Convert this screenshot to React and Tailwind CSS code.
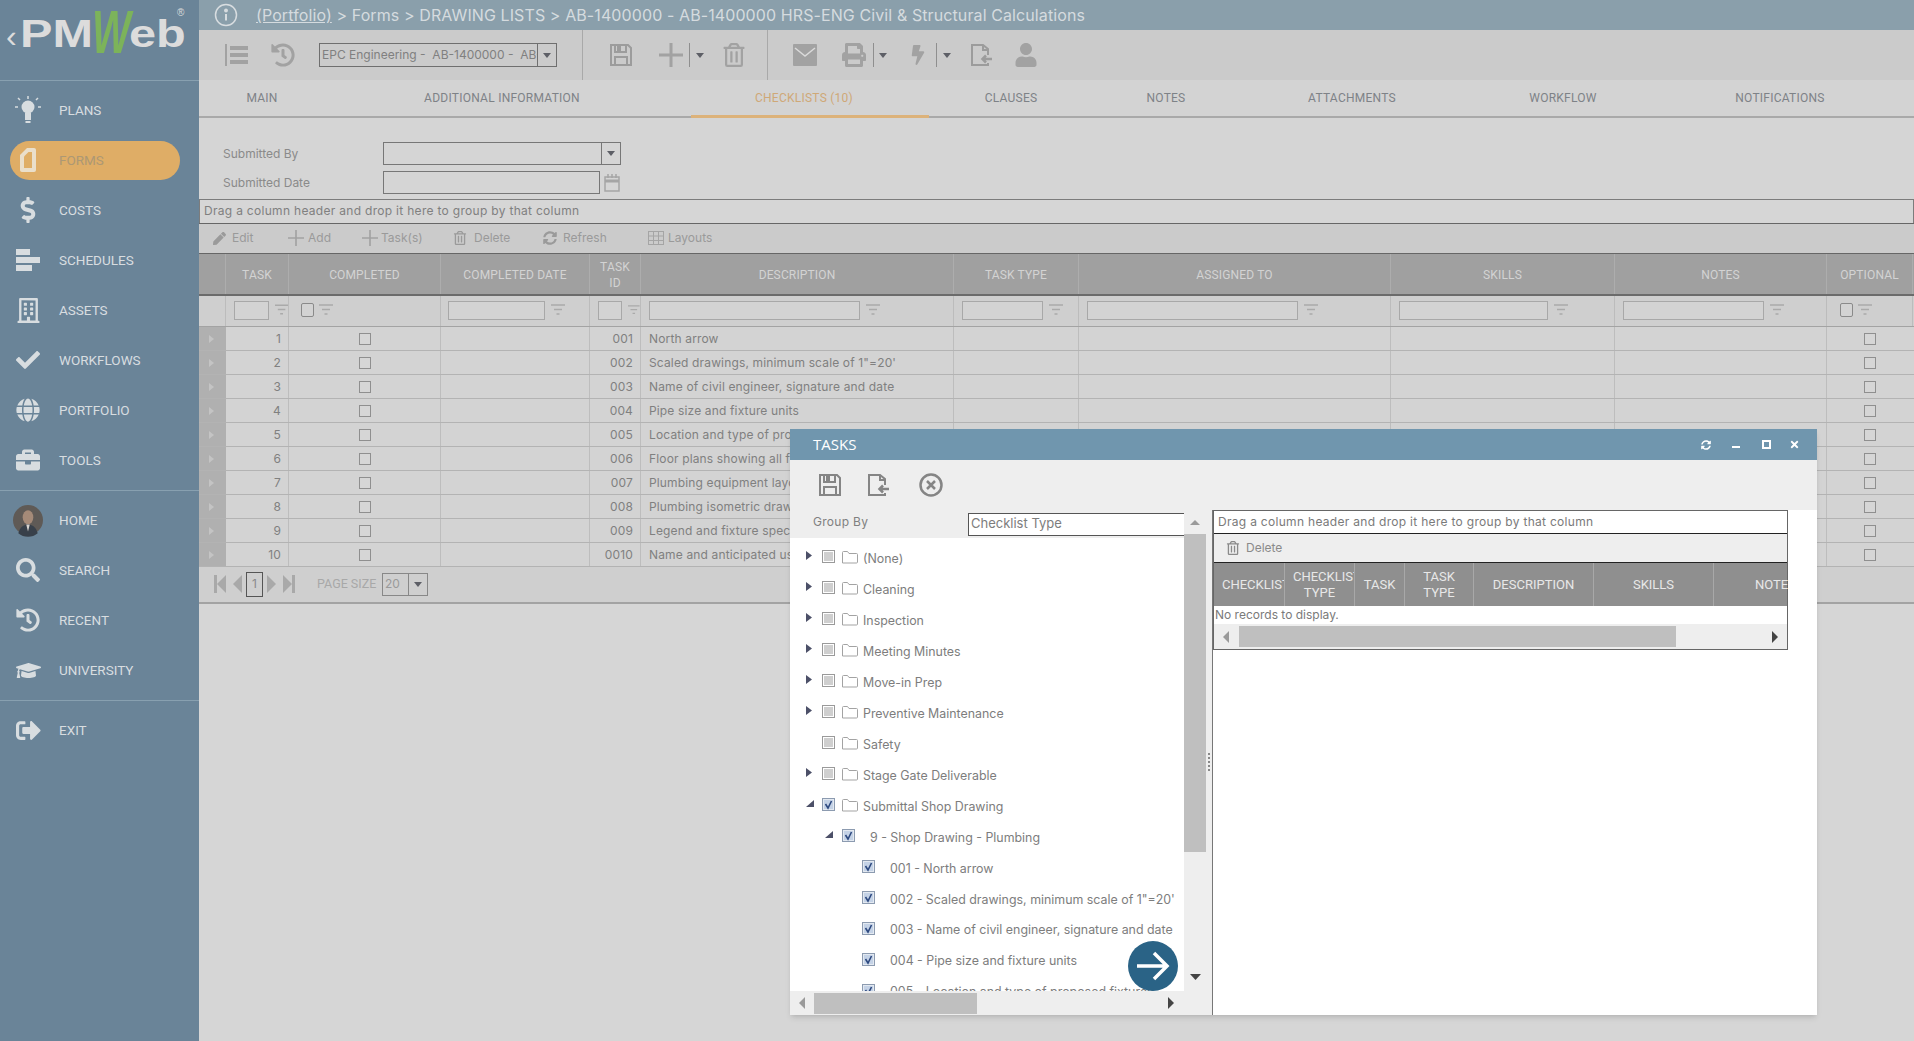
import React from 'react';
import { FaHistory, FaRegTrashAlt, FaPrint, FaBolt, FaUser, FaDollarSign, FaCheck, FaGlobe, FaBriefcase, FaSearch, FaGraduationCap, FaSignOutAlt, FaRegBuilding, FaPen, FaSyncAlt, FaTimes } from 'react-icons/fa';

const GRID = 'grid grid-cols-[27px_63px_152px_149px_51px_313px_125px_312px_224px_212px_86px]';

function Bulb() {
  return (
    <svg width="26" height="28" viewBox="0 0 26 28" fill="#d8dde0">
      <circle cx="13" cy="11" r="6.5" />
      <rect x="10" y="17" width="6" height="7" />
      <rect x="10.5" y="25" width="5" height="2" />
      <path d="M13 0v3M3 11H0M26 11h-3M5 4 3 2M21 4l2-2" stroke="#d8dde0" strokeWidth="1.5" />
    </svg>
  );
}
function FormDoc() {
  return (
    <svg width="18" height="26" viewBox="0 0 18 26" fill="none">
      <path d="M1 8 8 1h7a2 2 0 0 1 2 2v20a2 2 0 0 1-2 2H3a2 2 0 0 1-2-2z" fill="#eadfcb" />
      <path d="M5 9.5 9.5 5H13v16H5z" fill="#dfae66" />
    </svg>
  );
}
function Bars() {
  return (
    <svg width="26" height="26" viewBox="0 0 26 26" fill="#d8dde0">
      <rect x="1" y="2" width="14" height="6" />
      <rect x="1" y="10" width="24" height="6" />
      <rect x="1" y="18" width="16" height="6" />
    </svg>
  );
}
function Avatar() {
  return (
    <svg width="34" height="34" viewBox="0 0 34 34">
      <circle cx="17" cy="17" r="17" fill="#5f5a56" />
      <ellipse cx="17" cy="14" rx="6" ry="8" fill="#a58a78" />
      <path d="M6 32c2-8 7-10 11-10s9 2 11 10a17 17 0 0 1-22 0z" fill="#38404a" />
      <path d="M15 22h4l-2 8z" fill="#d8d4d0" />
    </svg>
  );
}

const NAV1 = [
  ['PLANS', <Bulb />],
  ['FORMS', <FormDoc />],
  ['COSTS', <FaDollarSign size={26} />],
  ['SCHEDULES', <Bars />],
  ['ASSETS', <FaRegBuilding size={25} />],
  ['WORKFLOWS', <FaCheck size={24} />],
  ['PORTFOLIO', <FaGlobe size={24} />],
  ['TOOLS', <FaBriefcase size={24} />],
];
const NAV2 = [
  ['HOME', <Avatar />],
  ['SEARCH', <FaSearch size={24} />],
  ['RECENT', <FaHistory size={24} />],
  ['UNIVERSITY', <FaGraduationCap size={25} />],
];

function NavRow({ label, icon }) {
  if (label === 'FORMS') {
    return (
      <div className="h-[50px] flex items-center pl-[10px]">
        <div className="w-[170px] h-[39px] rounded-full bg-[#dfad66] flex items-center pl-[3px]">
          <span className="w-[30px] flex justify-center">{icon}</span>
          <span className="ml-[16px] text-[13.5px] text-[#ad9874]">{label}</span>
        </div>
      </div>
    );
  }
  return (
    <div className="h-[50px] flex items-center pl-[13px] text-[#d8dde0]">
      <span className="w-[30px] flex justify-center">{icon}</span>
      <span className="ml-[16px] text-[13.5px]">{label}</span>
    </div>
  );
}

function Sidebar() {
  return (
    <aside className="w-[199px] shrink-0 bg-[#6a8498] h-full font-['Roboto',sans-serif]">
      <div className="h-[81px] border-b border-[#88a0b0] relative overflow-hidden font-['Liberation_Sans',sans-serif] text-[#dcdcdc]">
        <span className="absolute left-[6px] top-[12px] text-[32px] font-light">‹</span>
        <span className="absolute left-[20px] top-[12px] text-[38px] leading-[44px] font-bold origin-left scale-x-[1.28]">PM</span>
        <span className="absolute left-[92px] top-[-6px] text-[62px] leading-[76px] font-bold italic text-[#7cb35a] origin-left scale-x-[0.66]">W</span>
        <span className="absolute left-[129px] top-[12px] text-[38px] leading-[44px] font-bold origin-left scale-x-[1.28]">eb</span>
        <span className="absolute left-[177px] top-[5px] text-[10px]">®</span>
      </div>
      <div className="pt-[4px] border-b border-[#88a0b0] pb-[5px]">
        {NAV1.map(([l, i]) => <NavRow key={l} label={l} icon={i} />)}
      </div>
      <div className="pt-[4px] border-b border-[#88a0b0] pb-[5px]">
        {NAV2.map(([l, i]) => <NavRow key={l} label={l} icon={i} />)}
      </div>
      <div className="pt-[4px]">
        <NavRow label="EXIT" icon={<FaSignOutAlt size={25} />} />
      </div>
    </aside>
  );
}

function Caret({ className = '' }) {
  return (
    <svg width="8" height="5" viewBox="0 0 8 5" className={className}><path d="M0 0h8L4 5z" fill="#5d5f66" /></svg>
  );
}
function SaveIcon({ size = 24, color = '#9c9c9c' }) {
  return (
    <svg width={size} height={size} viewBox="0 0 24 24" fill="none" stroke={color} strokeWidth="2">
      <path d="M2 2h17l3 3v17H2z" />
      <path d="M6 2v7h11V2" />
      <rect x="8" y="3" width="4" height="5" fill={color} stroke="none" />
      <path d="M6 22v-8h12v8" />
    </svg>
  );
}
function DocIcon({ size = 24, color = '#9c9c9c' }) {
  return (
    <svg width={size} height={size} viewBox="0 0 24 24" fill="none" stroke={color} strokeWidth="2">
      <path d="M19 12V6l-5-4H3v20h16v-2" />
      <path d="M14 2v5h5" />
      <path d="M23 16h-9M17 12.5 13.5 16l3.5 3.5" strokeWidth="2.5" />
    </svg>
  );
}
function ListIcon() {
  return (
    <svg width="24" height="24" viewBox="0 0 24 24" fill="#a2a2a2">
      <rect x="6" y="3" width="18" height="4" />
      <rect x="6" y="10" width="18" height="4" />
      <rect x="6" y="17" width="18" height="4" />
      <rect x="1" y="1" width="2" height="22" />
    </svg>
  );
}
function PlusThin({ size = 24, color = '#a2a2a2', w = 3 }) {
  return (
    <svg width={size} height={size} viewBox="0 0 24 24" stroke={color} strokeWidth={w}><path d="M12 0v24M0 12h24" /></svg>
  );
}
function Mail() {
  return (
    <svg width="24" height="24" viewBox="0 0 24 24">
      <rect y="1" width="24" height="22" rx="1" fill="#a2a2a2" />
      <path d="M2 5l10 8 10-8" fill="none" stroke="#dadada" strokeWidth="1.5" />
    </svg>
  );
}

function Toolbar() {
  return (
    <div className="h-[50px] bg-[#cbcbcb] flex items-center text-[#a2a2a2]">
      <span className="ml-[25px] w-[24px]"><ListIcon /></span>
      <span className="ml-[23px] w-[24px]"><FaHistory size={24} /></span>
      <div className="ml-[24px] w-[238px] h-[24px] border border-[#6f6f6f] flex items-center justify-between text-[12px] text-[#808080]">
        <span className="pl-[2px] whitespace-pre overflow-hidden w-[218px]">EPC Engineering -  AB-1400000 -  AB-1400000</span>
        <span className="w-[19px] h-full border-l border-[#6f6f6f] flex items-center justify-center"><Caret /></span>
      </div>
      <span className="ml-[25px] w-px h-full bg-[#a9a9a9]" />
      <span className="ml-[26px] w-[24px]"><SaveIcon /></span>
      <span className="ml-[26px] w-[24px]"><PlusThin /></span>
      <span className="ml-[6px] w-px h-[24px] bg-[#8f8f8f]" />
      <Caret className="ml-[6px]" />
      <span className="ml-[18px] w-[22px]"><FaRegTrashAlt size={24} /></span>
      <span className="ml-[23px] w-px h-full bg-[#a9a9a9]" />
      <span className="ml-[25px] w-[24px]"><Mail /></span>
      <span className="ml-[25px] w-[24px]"><FaPrint size={24} /></span>
      <span className="ml-[7px] w-px h-[24px] bg-[#8f8f8f]" />
      <Caret className="ml-[5px]" />
      <span className="ml-[21px] w-[20px]"><FaBolt size={20} /></span>
      <span className="ml-[8px] w-px h-[24px] bg-[#8f8f8f]" />
      <Caret className="ml-[6px]" />
      <span className="ml-[18px] w-[22px]"><DocIcon size={24} /></span>
      <span className="ml-[23px] w-[24px]"><FaUser size={24} /></span>
    </div>
  );
}

function Tabs() {
  const t = 'h-full flex items-center justify-center text-[12px] text-[#7e8287] font-[\'Roboto\',sans-serif] tracking-[0.25px]';
  return (
    <div className="h-[38px] bg-[#d3d3d3] border-b-2 border-[#a9a9a9] flex">
      <div className={`${t} w-[126px]`}>MAIN</div>
      <div className={`${t} w-[354px]`}>ADDITIONAL INFORMATION</div>
      <div className={`${t} w-[250px] relative text-[#cfa877]`}>
        CHECKLISTS (10)
        <span className="absolute left-[12px] right-0 bottom-[-2px] h-[3px] bg-[#dcb27a]" />
      </div>
      <div className={`${t} w-[164px]`}>CLAUSES</div>
      <div className={`${t} w-[146px]`}>NOTES</div>
      <div className={`${t} w-[226px]`}>ATTACHMENTS</div>
      <div className={`${t} w-[196px]`}>WORKFLOW</div>
      <div className={`${t} w-[238px]`}>NOTIFICATIONS</div>
    </div>
  );
}

function FormArea() {
  return (
    <div className="h-[81px] bg-[#d5d5d5] pt-[24px] pl-[24px] text-[12px] text-[#8a8a8a]">
      <div className="flex items-center h-[23px]">
        <span className="w-[160px]">Submitted By</span>
        <div className="w-[238px] h-[23px] border border-[#777] flex justify-end">
          <span className="w-[19px] border-l border-[#777] flex items-center justify-center"><Caret /></span>
        </div>
      </div>
      <div className="flex items-center h-[23px] mt-[6px]">
        <span className="w-[160px]">Submitted Date</span>
        <div className="w-[217px] h-[23px] border border-[#777]" />
        <svg className="ml-[4px]" width="16" height="18" viewBox="0 0 16 18" fill="none" stroke="#a5a5a5" strokeWidth="1.5">
          <rect x="1" y="3" width="14" height="14" />
          <path d="M1 7h14" strokeWidth="3" />
          <path d="M4 0v4M12 0v4M8 0v4" />
        </svg>
      </div>
    </div>
  );
}

function ToolItem({ className, icon, label, gap }) {
  return (
    <div className={`flex items-center shrink-0 ${className}`}>
      <span className="flex items-center justify-center">{icon}</span>
      <span className={gap}>{label}</span>
    </div>
  );
}

function GridToolbar() {
  return (
    <div className="h-[31px] bg-[#cbcbcb] border-y border-[#666] flex items-center pl-[14px] pb-[1px] text-[12px] text-[#9a9a9a]">
      <ToolItem className="w-[75px]" icon={<FaPen size={13} />} label="Edit" gap="ml-[6px]" />
      <ToolItem className="w-[74px]" icon={<PlusThin size={16} w={2.5} />} label="Add" gap="ml-[4px]" />
      <ToolItem className="w-[91px]" icon={<PlusThin size={16} w={2.5} />} label="Task(s)" gap="ml-[3px]" />
      <ToolItem className="w-[90px]" icon={<FaRegTrashAlt size={14} />} label="Delete" gap="ml-[7px]" />
      <ToolItem className="w-[105px]" icon={<FaSyncAlt size={14} />} label="Refresh" gap="ml-[6px]" />
      <ToolItem className="w-[100px]" icon={
        <svg width="16" height="14" viewBox="0 0 16 14" fill="none" stroke="#a5a5a5"><rect x=".5" y=".5" width="15" height="13" /><path d="M.5 5h15M.5 9.5h15M5.5 .5v13M10.5 .5v13" /></svg>
      } label="Layouts" gap="ml-[4px]" />
    </div>
  );
}

function HeadCell({ children, two }) {
  return (
    <div className={`border-r border-[#adadad] pt-[1px] flex items-center justify-center text-center text-[12px] tracking-[0.15px] text-[#d3d3d3] font-['Roboto',sans-serif] ${two ? 'leading-[16px]' : ''}`}>
      {children}
    </div>
  );
}

function FilterIcon({ className = '' }) {
  return (
    <svg width="14" height="12" viewBox="0 0 14 12" className={className} stroke="#aaaaaa" strokeWidth="1.5"><path d="M0 1h14M3 5.5h8M5.5 10h3" /></svg>
  );
}

function FilterInput({ className }) {
  return (
    <div className="border-r border-[#bcbcbc] flex items-center pb-[2px]">
      <span className={`h-[19px] border border-[#a8a8a8] bg-[#d3d3d3] ${className}`} />
      <FilterIcon className="ml-[6px]" />
    </div>
  );
}
function FilterCheck({ className }) {
  return (
    <div className="border-r border-[#bcbcbc] flex items-center pb-[2px]">
      <span className={`w-[13px] h-[14px] border border-[#8a8a8a] rounded-[2px] bg-[#d3d3d3] ${className}`} />
      <FilterIcon className="ml-[5px]" />
    </div>
  );
}

const ROWS = [
  ['1', '001', 'North arrow'],
  ['2', '002', 'Scaled drawings, minimum scale of 1"=20\''],
  ['3', '003', 'Name of civil engineer, signature and date'],
  ['4', '004', 'Pipe size and fixture units'],
  ['5', '005', 'Location and type of proposed fixtures'],
  ['6', '006', 'Floor plans showing all fixtures'],
  ['7', '007', 'Plumbing equipment layout'],
  ['8', '008', 'Plumbing isometric drawings'],
  ['9', '009', 'Legend and fixture specifications'],
  ['10', '0010', 'Name and anticipated use'],
];

function Box() {
  return <span className="w-[12px] h-[12px] border border-[#8f8f8f] bg-[#d6d6d6]" />;
}

function DataGrid() {
  const c = 'border-r border-[#bdbdbd]';
  return (
    <div className="text-[12px] text-[#808080] tracking-[0.15px]">
      <div className={`${GRID} h-[42px] bg-[#a0a0a0] border-b-2 border-[#6b6b6b]`}>
        <HeadCell />
        <HeadCell>TASK</HeadCell>
        <HeadCell>COMPLETED</HeadCell>
        <HeadCell>COMPLETED DATE</HeadCell>
        <HeadCell two>TASK<br />ID</HeadCell>
        <HeadCell>DESCRIPTION</HeadCell>
        <HeadCell>TASK TYPE</HeadCell>
        <HeadCell>ASSIGNED TO</HeadCell>
        <HeadCell>SKILLS</HeadCell>
        <HeadCell>NOTES</HeadCell>
        <HeadCell>OPTIONAL</HeadCell>
      </div>
      <div className={`${GRID} h-[31px] bg-[#cfcfcf] border-b border-[#a3a3a3]`}>
        <div className="border-r border-[#bcbcbc]" />
        <FilterInput className="ml-[8px] w-[37px]" />
        <FilterCheck className="ml-[12px]" />
        <FilterInput className="ml-[7px] w-[97px]" />
        <FilterInput className="ml-[8px] w-[29px]" />
        <FilterInput className="ml-[8px] w-[211px]" />
        <FilterInput className="ml-[8px] w-[81px]" />
        <FilterInput className="ml-[8px] w-[211px]" />
        <FilterInput className="ml-[8px] w-[149px]" />
        <FilterInput className="ml-[8px] w-[141px]" />
        <FilterCheck className="ml-[13px]" />
      </div>
      {ROWS.map(([n, id, d]) => (
        <div key={id} className={`${GRID} h-[24px] bg-[#d3d3d3] border-b border-[#b3b3b3]`}>
          <div className="bg-[#b0b0b0] flex items-center pl-[10px]">
            <svg width="5" height="8" viewBox="0 0 5 8"><path d="M0 0l5 4-5 4z" fill="#c4c4c4" /></svg>
          </div>
          <div className={`${c} flex items-center justify-end pr-[7px]`}>{n}</div>
          <div className={`${c} flex items-center justify-center`}><Box /></div>
          <div className={c} />
          <div className={`${c} flex items-center justify-end pr-[7px]`}>{id}</div>
          <div className={`${c} flex items-center pl-[8px] whitespace-nowrap overflow-hidden`}>{d}</div>
          <div className={c} />
          <div className={c} />
          <div className={c} />
          <div className={c} />
          <div className="flex items-center justify-center"><Box /></div>
        </div>
      ))}
    </div>
  );
}

function Tri({ dir = 'right', color = '#a9a9a9', h = 18, w = 9 }) {
  const d = dir === 'right' ? 'M0 0l9 9-9 9z' : 'M9 0L0 9l9 9z';
  return <svg width={w} height={h} viewBox="0 0 9 18"><path d={d} fill={color} /></svg>;
}

function Pager() {
  const bar = <span className="w-[3px] h-[18px] bg-[#a9a9a9]" />;
  return (
    <div className="h-[37px] bg-[#cfcfcf] border-b-2 border-[#a3a3a3] flex items-center pb-[1px] text-[#a2a2a2]">
      <span className="ml-[15px] flex items-center">{bar}<Tri dir="left" /></span>
      <span className="ml-[7px]"><Tri dir="left" /></span>
      <span className="ml-[4px] w-[17px] h-[25px] border border-[#555] flex items-center justify-center text-[12px] text-[#8a8a8a]">1</span>
      <span className="ml-[4px]"><Tri /></span>
      <span className="ml-[7px] flex items-center"><Tri />{bar}</span>
      <span className="ml-[22px] text-[12.5px] font-['Roboto',sans-serif] text-[#a8a8a8] w-[65px] whitespace-nowrap">PAGE SIZE</span>
      <div className="w-[46px] h-[23px] border border-[#888] flex items-center text-[12px] text-[#9a9a9a]">
        <span className="w-[25px] pl-[2px]">20</span>
        <span className="flex-1 h-full border-l border-[#888] flex items-center justify-center"><Caret /></span>
      </div>
    </div>
  );
}

function Main() {
  return (
    <main className="flex-1 min-w-0 bg-[#d6d6d6] h-full">
      <div className="h-[30px] bg-[#8a9fab] flex items-center text-[16px] tracking-[0.1px] text-[#d5dbdf] whitespace-nowrap">
        <svg className="ml-[15px]" width="24" height="24" viewBox="0 0 24 24" fill="none" stroke="#d8dde0" strokeWidth="1.5">
          <circle cx="12" cy="12" r="10.5" />
          <circle cx="12" cy="7.5" r="1.2" fill="#d8dde0" />
          <path d="M12 11v6.5" strokeWidth="2" />
        </svg>
        <span className="ml-[18px]"><span className="underline">(Portfolio)</span> &gt; Forms &gt; DRAWING LISTS &gt; AB-1400000 - AB-1400000 HRS-ENG Civil &amp; Structural Calculations</span>
      </div>
      <Toolbar />
      <Tabs />
      <FormArea />
      <div className="h-[24px] bg-[#d6d6d6] border border-[#7c7c7c] border-b-0 pl-[4px] pb-[1px] flex items-center text-[12px] tracking-[0.3px] text-[#808080]">
        Drag a column header and drop it here to group by that column
      </div>
      <GridToolbar />
      <DataGrid />
      <Pager />
    </main>
  );
}

function TreeArrow({ open }) {
  return open ? (
    <svg width="8" height="8" viewBox="0 0 8 8"><path d="M8 0v7H0z" fill="#4c5068" /></svg>
  ) : (
    <svg width="6" height="9" viewBox="0 0 6 9"><path d="M0 0l6 4.5L0 9z" fill="#4c5068" /></svg>
  );
}
function Cb({ checked }) {
  return checked ? (
    <svg width="13" height="13" viewBox="0 0 13 13">
      <rect x=".5" y=".5" width="12" height="12" fill="#e3e9f1" stroke="#8c9bb0" />
      <rect x="2" y="2" width="9" height="9" fill="#c4d2e6" />
      <path d="M3.5 6 6 10l3.5-7" fill="none" stroke="#2e4a80" strokeWidth="1.6" />
    </svg>
  ) : (
    <svg width="13" height="13" viewBox="0 0 13 13">
      <rect x=".5" y=".5" width="12" height="12" fill="#fff" stroke="#9a9a9a" />
      <rect x="2" y="2" width="9" height="9" fill="#cfcfcf" />
    </svg>
  );
}
function Folder() {
  return (
    <svg width="16" height="13" viewBox="0 0 16 13" fill="none" stroke="#a3a3a3"><path d="M.5 12V1.5a1 1 0 0 1 1-1h4l1.5 2h7.5a1 1 0 0 1 1 1V11a1 1 0 0 1-1 1z" /></svg>
  );
}

const GROUPS = [
  ['(None)', true], ['Cleaning', true], ['Inspection', true], ['Meeting Minutes', true],
  ['Move-in Prep', true], ['Preventive Maintenance', true], ['Safety', false], ['Stage Gate Deliverable', true],
];
const LEAVES = [
  '001 - North arrow',
  '002 - Scaled drawings, minimum scale of 1"=20\'',
  '003 - Name of civil engineer, signature and date',
  '004 - Pipe size and fixture units',
  '005 - Location and type of proposed fixtures',
];

function GroupRow({ label, arrow, open, checked }) {
  return (
    <div className="h-[31px] flex items-center pl-[16px] shrink-0">
      <span className="w-[16px] -mt-[7px] flex">{arrow && <TreeArrow open={open} />}</span>
      <span className="-mt-[5px] flex"><Cb checked={checked} /></span>
      <span className="ml-[7px] -mt-[4px] flex"><Folder /></span>
      <span className="ml-[5px]">{label}</span>
    </div>
  );
}

function Tree() {
  return (
    <div className="flex-1 min-h-0 overflow-hidden bg-white pt-[5.5px] text-[12.4px] text-[#7d7d7d] whitespace-nowrap">
      {GROUPS.map(([l, a]) => <GroupRow key={l} label={l} arrow={a} />)}
      <GroupRow label="Submittal Shop Drawing" arrow open checked />
      <div className="h-[31px] flex items-center pl-[35px]">
        <span className="w-[17px] -mt-[7px] flex"><TreeArrow open /></span>
        <span className="-mt-[5px] flex"><Cb checked /></span>
        <span className="ml-[15px]">9 - Shop Drawing - Plumbing</span>
      </div>
      {LEAVES.map((l) => (
        <div key={l} className="h-[30.9px] flex items-center pl-[72px]">
          <span className="-mt-[5px] flex"><Cb checked /></span>
          <span className="ml-[15px]">{l}</span>
        </div>
      ))}
    </div>
  );
}

function RightGrid() {
  const h = 'border-r border-[#a8a8a8] flex items-center justify-center text-center text-[13px] leading-[16px] text-[#e8e8e8] font-[\'Roboto\',sans-serif] overflow-hidden whitespace-nowrap';
  return (
    <div className="w-[575px] h-[140px] border border-[#666] flex flex-col text-[12px] text-[#7a7a7a]">
      <div className="h-[23px] bg-white border-b border-[#222] pl-[4px] flex items-center shrink-0 tracking-[0.3px]">Drag a column header and drop it here to group by that column</div>
      <div className="h-[29px] bg-[#eeeeee] border-b border-[#222] flex items-center pl-[12px] text-[#8a8a8a] shrink-0">
        <FaRegTrashAlt size={14} />
        <span className="ml-[6px]">Delete</span>
      </div>
      <div className="h-[43px] bg-[#8f8f8f] grid grid-cols-[71px_70px_50px_69px_120px_120px_74px] shrink-0">
        <div className={`${h} justify-start pl-[8px]`}>CHECKLIST</div>
        <div className={`${h} flex-col`}>
          <span className="self-start pl-[8px]">CHECKLIST</span>
          <span>TYPE</span>
        </div>
        <div className={h}>TASK</div>
        <div className={h}>TASK<br />TYPE</div>
        <div className={h}>DESCRIPTION</div>
        <div className={h}>SKILLS</div>
        <div className={`${h} justify-start pl-[41px] border-r-0`}>NOTES</div>
      </div>
      <div className="h-[18px] bg-white pl-[1px] flex items-center shrink-0">No records to display.</div>
      <div className="flex-1 bg-[#eeeeee] flex items-center">
        <span className="ml-[9px] flex"><Tri dir="left" color="#9a9a9a" h={12} w={6} /></span>
        <span className="ml-[10px] w-[437px] h-[21px] bg-[#bfbfbf]" />
        <span className="ml-[96px] flex"><Tri color="#444" h={12} w={6} /></span>
      </div>
    </div>
  );
}

function Modal() {
  return (
    <div className="absolute left-[790px] top-[429px] w-[1027px] h-[586px] flex flex-col bg-[#eeeeee] shadow-md">
      <div className="h-[31px] bg-[#7096ae] flex items-center pl-[23px] text-white shrink-0">
        <span className="text-[15px] font-['Open_Sans',sans-serif]">TASKS</span>
        <span className="ml-auto mr-[17px] flex items-center">
          <FaSyncAlt size={10} className="mr-[21px]" />
          <span className="w-[8px] h-[2px] bg-white mt-[4px] mr-[22px]" />
          <span className="w-[9px] h-[9px] border-2 border-white mr-[18px]" />
          <FaTimes size={11} />
        </span>
      </div>
      <div className="h-[50px] flex items-center pl-[28px] gap-[24px] shrink-0">
        <SaveIcon size={24} color="#858585" />
        <DocIcon size={24} color="#858585" />
        <svg width="24" height="24" viewBox="0 0 24 24" fill="none" stroke="#858585" strokeWidth="2.5" className="ml-[5px]">
          <circle cx="12" cy="12" r="10.5" />
          <path d="M8 8l8 8M16 8l-8 8" />
        </svg>
      </div>
      <div className="flex-1 min-h-0 flex">
        <div className="w-[422px] shrink-0 flex">
          <div className="w-[394px] flex flex-col shrink-0">
            <div className="h-[28px] flex items-center pl-[23px] shrink-0">
              <span className="w-[155px] text-[12px] tracking-[0.3px] text-[#808080] -mt-[4px]">Group By</span>
              <span className="w-[216px] h-[23px] bg-white border border-[#555] border-r-0 flex items-center pl-[2px] text-[13px] text-[#7d7d7d]">Checklist Type</span>
            </div>
            <Tree />
            <div className="h-[24px] shrink-0 flex items-center">
              <span className="ml-[9px] flex"><Tri dir="left" color="#9a9a9a" h={12} w={6} /></span>
              <span className="ml-[9px] w-[163px] h-[21px] bg-[#bfbfbf]" />
              <span className="ml-[191px] flex"><Tri color="#444" h={12} w={6} /></span>
            </div>
          </div>
          <div className="w-[22px] shrink-0 flex flex-col items-center pt-[4px]">
            <svg width="10" height="5" viewBox="0 0 10 5" className="mt-[6px]"><path d="M0 5l5-5 5 5z" fill="#9a9a9a" /></svg>
            <span className="w-full h-[318px] bg-[#bfbfbf] mt-[9px]" />
            <svg width="11" height="6" viewBox="0 0 11 6" className="mt-[122px]"><path d="M0 0h11L5.5 6z" fill="#444" /></svg>
          </div>
          <div className="flex-1 flex items-center justify-center">
            <span className="w-[2px] h-[18px] border-l-2 border-dotted border-[#888] -mt-[2px]" />
          </div>
        </div>
        <div className="flex-1 bg-white border-l border-[#777]">
          <RightGrid />
        </div>
      </div>
      <div className="absolute left-[338px] top-[512px] w-[50px] h-[50px] rounded-full bg-[#2a6386] flex items-center justify-center">
        <svg width="34" height="34" viewBox="0 0 34 34" fill="none" stroke="#fff" strokeWidth="3.5"><path d="M1 17h30M18 4l13 13-13 13" /></svg>
      </div>
    </div>
  );
}

export default function App() {
  return (
    <div className="relative w-[1914px] h-[1041px] overflow-hidden flex bg-[#d6d6d6] font-['Inter',sans-serif]">
      <Sidebar />
      <Main />
      <Modal />
    </div>
  );
}
